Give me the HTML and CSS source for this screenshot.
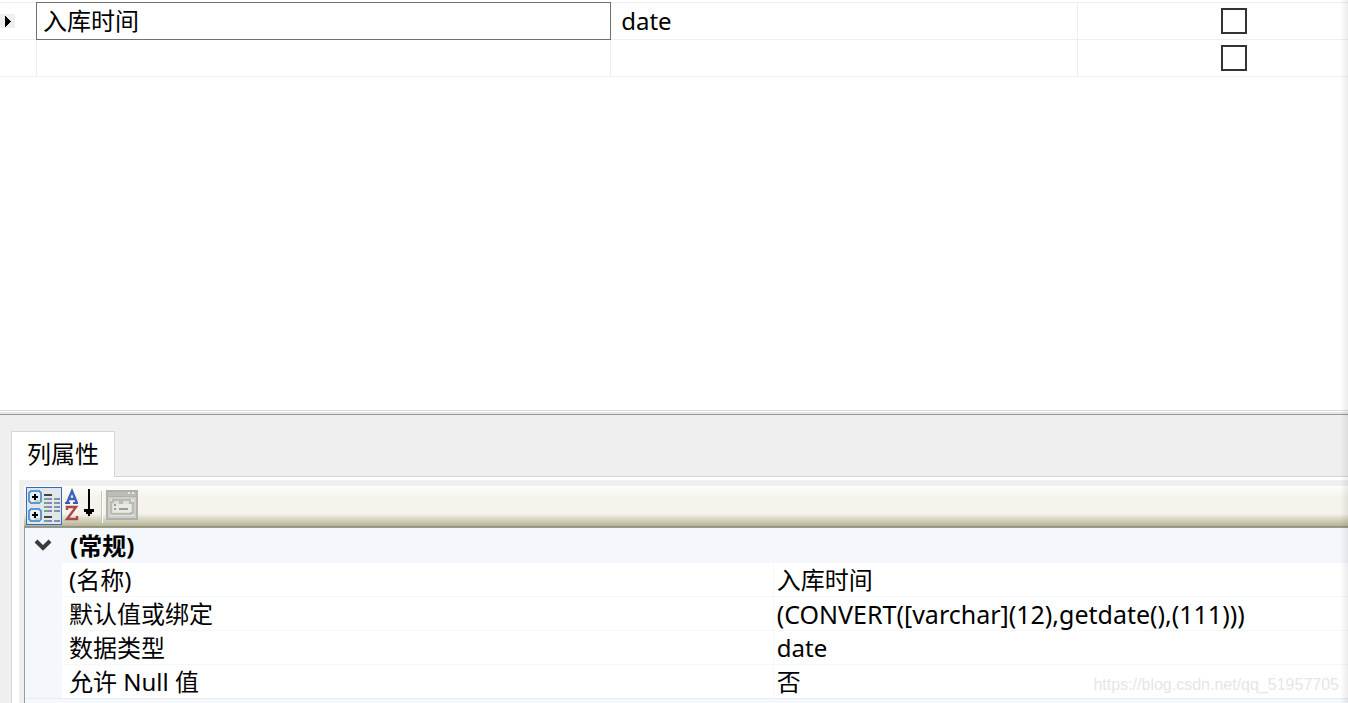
FILE: index.html
```html
<!DOCTYPE html>
<html lang="zh-CN">
<head>
<meta charset="utf-8">
<title>列属性</title>
<link rel="stylesheet" href="styles.css">
</head>
<body>
<main class="designer">
  <section class="columns-pane">
    <table class="columns">
      <colgroup><col class="col-mark"><col class="col-name"><col class="col-type"><col class="col-null"></colgroup>
      <tbody>
        <tr>
          <td><span class="row-mark"><svg width="7" height="11" viewBox="0 0 7 11" shape-rendering="crispEdges"><path d="M0 0h1v1h1v1h1v1h1v1h1v1h1v1h-1v1h-1v1h-1v1h-1v1h-1v1h-1z"/></svg></span></td>
          <td class="editing"><input class="name-input" type="text" value="入库时间" aria-label="列名"></td>
          <td class="type">date</td>
          <td class="null"><input class="check" type="checkbox" aria-label="允许 Null 值"></td>
        </tr>
        <tr>
          <td></td>
          <td></td>
          <td></td>
          <td class="null"><input class="check" type="checkbox" aria-label="允许 Null 值"></td>
        </tr>
      </tbody>
    </table>
  </section>
  <div class="splitter"></div>
  <section class="properties-pane">
    <div class="tabs" role="tablist">
      <button class="tab" type="button" role="tab" aria-selected="true">列属性</button>
    </div>
    <div class="tab-page">
      <div class="property-grid">
        <div class="toolbar">
          <button class="tool selected" type="button" aria-label="按分类顺序">
            <svg width="34" height="36" viewBox="0 0 34 36" shape-rendering="crispEdges">
              <g fill="#e9edf0" stroke="#5b9bd5" stroke-width="2"><path d="M4 3h8l2 2v8l-2 2h-8l-2-2v-8zM4 21h8l2 2v8l-2 2h-8l-2-2v-8z"/></g>
              <path fill="#d4d3b8" d="M8 12h5v2h-5zM8 30h5v2h-5z"/>
              <path fill="#000" d="M5 8h6v2h-6zM7 6h2v6h-2zM5 26h6v2h-6zM7 24h2v6h-2z"/>
              <path fill="#444" d="M17 6h8v2h-8zM17 28h8v2h-8z"/>
              <path fill="#77a08f" d="M17 10h4v2h-4zM17 14h4v2h-4zM17 18h4v2h-4zM17 22h4v2h-4zM17 32h4v2h-4zM27 10h3v2h-3zM27 14h3v2h-3zM27 18h3v2h-3zM27 22h3v2h-3zM27 32h3v2h-3z"/>
              <path fill="#8b83b9" d="M21 10h4v2h-4zM21 14h4v2h-4zM21 18h4v2h-4zM21 22h4v2h-4zM21 32h4v2h-4zM30 10h3v2h-3zM30 14h3v2h-3zM30 18h3v2h-3zM30 22h3v2h-3zM30 32h3v2h-3z"/>
            </svg>
          </button>
          <button class="tool" type="button" aria-label="按字母顺序">
            <svg width="34" height="36" viewBox="-2 -2 34 36">
              <path fill="none" stroke="#3c62bd" stroke-width="2.4" d="M3 14l5-12 5 12M5 10h6"/>
              <path fill="#3c57ad" d="M1 13h5v2h-5zM9 13h5v2h-5z"/>
              <path fill="none" stroke="#a9474a" stroke-width="2.4" d="M3 21v-3h9l-9 12h10v-3"/>
              <path fill="#f3f3ee" d="M19 18h13v3h-13z"/>
              <path fill="#000" d="M24 0h2v20h4v3h-2v2h-2v2h-2v-2h-2v-2h-2v-3h4z"/>
            </svg>
          </button>
          <span class="separator"></span>
          <button class="tool pages" type="button" aria-label="属性页" disabled>
            <svg width="32" height="30" viewBox="0 0 32 30" shape-rendering="crispEdges">
              <path fill="#b0b1aa" d="M0 0h32v30h-32z"/>
              <path fill="#bcbdb6" d="M2 2h28v4h-28z"/>
              <path fill="#cecfc9" d="M2 7h28v21h-28z"/>
              <path fill="#e2e2dc" d="M4 9h24v17h-24z"/>
              <path fill="#deded8" stroke="#b9bab2" stroke-width="2" d="M5 23v-11h2v-2h7v3h2v-3h8v3h3v10h-2v1h-19z"/>
              <path fill="#e9e9e4" d="M7 14h18v8h-18z"/>
              <path fill="#9b9c94" d="M8 14h2v2h-2zM8 18h2v2h-2zM13 18h9v2h-9z"/>
              <path fill="#e8e8e4" d="M22 2h2v2h-2zM26 2h2v2h-2z"/>
            </svg>
          </button>
        </div>
        <table class="props">
          <colgroup><col class="col-indent"><col class="col-label"><col class="col-value"></colgroup>
          <tbody>
            <tr class="category">
              <td><button class="expander" type="button" aria-label="折叠" aria-expanded="true"><svg width="18" height="12" viewBox="0 0 18 12"><path d="M2 2l7 7 7-7" fill="none" stroke="#3b3b3b" stroke-width="4"/></svg></button></td>
              <th colspan="2" scope="rowgroup">(常规)</th>
            </tr>
            <tr><td></td><th scope="row">(名称)</th><td class="value">入库时间</td></tr>
            <tr><td></td><th scope="row">默认值或绑定</th><td class="value expression">(CONVERT([varchar](12),getdate(),(111)))</td></tr>
            <tr><td></td><th scope="row">数据类型</th><td class="value">date</td></tr>
            <tr><td></td><th scope="row">允许 Null 值</th><td class="value">否</td></tr>
          </tbody>
        </table>
        <div class="next-category"></div>
      </div>
    </div>
  </section>
</main>
<div class="watermark">https://blog.csdn.net/qq_51957705</div>
<div class="edge-shade"></div>
</body>
</html>
```
FILE: styles.css
```css
* { box-sizing: border-box; }
body {
  margin: 0;
  background: #fff;
  color: #000;
  font: 24px/32px "Noto Sans", "Noto Sans CJK SC", sans-serif;
}
button, input { margin: 0; padding: 0; border: 0; background: none; color: inherit; font: inherit; }
svg { display: block; }
table { width: 100%; border-collapse: separate; border-spacing: 0; table-layout: fixed; }
td, th { padding: 0; text-align: left; }

.designer { display: flex; flex-direction: column; height: 100vh; overflow: hidden; }

.columns-pane { flex: 1; padding-top: 2px; }
.col-mark { width: 37px; }
.col-name { width: 42.6%; }
.col-type { width: 34.6%; }
.columns td { height: 37px; border-right: 1px solid #eee; border-bottom: 1px solid #eee; }
.columns tr:first-child td { height: 38px; border-top: 1px solid #eee; }
.columns tr:first-child td.editing { border: 0; }
.columns td.null { border-right: 0; padding-left: 42px; text-align: center; }
.columns td.type { padding-left: 10px; }
.name-input { display: block; width: calc(100% + 1px); height: 38px; margin-left: -1px; padding: 0 6px 4px; border: 1px solid #707070; background: #fff; outline: none; }
.row-mark { display: flex; align-items: center; width: 15px; height: 14px; padding-left: 5px; background: #efefef; }
.check { display: block; width: 26px; height: 26px; margin: 0 auto; border: 2px solid #333; background: #fff; appearance: none; }

.splitter { height: 5px; border-top: 1px solid #dcdcdc; border-bottom: 1px solid #999; background: linear-gradient(#fff 1px, #e6e6e6 1px); }

.properties-pane { padding: 16px 0 0 11px; background: #efefef; }
.tabs { display: flex; border-bottom: 1px solid #d5d5d5; }
.tab { height: 46px; margin-bottom: -1px; padding: 0 15px 2px; border: 1px solid #d5d5d5; border-bottom: 0; background: #fff; }
.tab-page { padding: 3px 0 0 7px; border-left: 1px solid #d5d5d5; background: #fff; }
.property-grid { padding: 6px 0 0 5px; background: #efefef; }
.toolbar {
  display: flex;
  align-items: flex-start;
  height: 41px;
  padding: 1px 2px;
  border-bottom: 1px solid #96966f;
  background: linear-gradient(#fdfdfa, #f5f3ec 12px, #f5f2ea 28px, #dedcca 32px, #b7b594 40px);
}
.tool { display: block; }
.tool.selected { border: 1px solid #316ac5; background: #e1e6e8; }
.separator { width: 2px; height: 32px; margin: 4px 3px 0 5px; border-left: 1px solid #c5c2b8; border-right: 1px solid #fff; }
.tool.pages { margin-top: 3px; }

.col-indent { width: 37px; }
.col-label { width: 53.8%; }
.props { border-top: 1px solid #999; border-left: 1px solid #999; background: #fff; }
.props th { font-weight: 400; }
.props td, .props th { height: 34px; padding-left: 7px; border-bottom: 1px solid #f4f7fc; white-space: nowrap; }
.props th { border-right: 1px solid #f4f7fc; }
.props td:first-child { padding-left: 9px; background: #f4f7fc; }
.props td.value { padding-left: 3px; }
.props td.expression { font-size: 25px; }
.props .category th { height: 35px; padding-top: 2px; padding-left: 8px; background: #f4f7fc; font-weight: 700; }
.props tr:last-child td, .props tr:last-child th { border-bottom-color: #e9ebee; }
.expander { display: block; }
.next-category { height: 4px; border-left: 1px solid #999; background: #f4f7fc; }

.watermark {
  position: absolute;
  right: 9px;
  bottom: 8px;
  color: #e6e6e6;
  font: 16px/20px "Liberation Sans", sans-serif;
}
.edge-shade {
  position: absolute;
  top: 0;
  right: 0;
  bottom: 0;
  width: 8px;
  background: linear-gradient(to right, transparent, rgba(0, 0, 0, .08));
  pointer-events: none;
}
```
